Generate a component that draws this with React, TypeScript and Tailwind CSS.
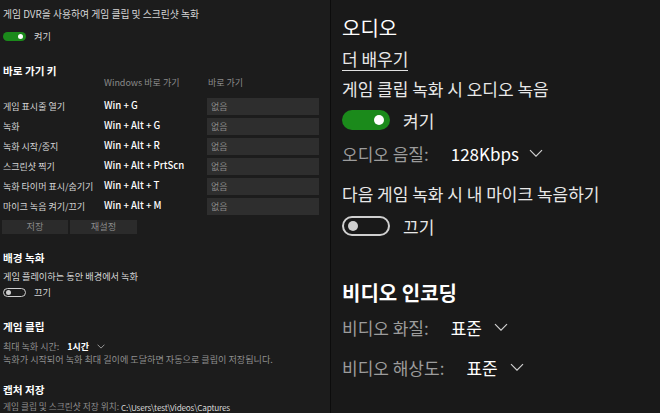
import React from 'react';

const shortcuts = [
  { label: '게임 표시줄 열기', keys: 'Win + G' },
  { label: '녹화', keys: 'Win + Alt + G' },
  { label: '녹화 시작/중지', keys: 'Win + Alt + R' },
  { label: '스크린샷 찍기', keys: 'Win + Alt + PrtScn' },
  { label: '녹화 타이머 표시/숨기기', keys: 'Win + Alt + T' },
  { label: '마이크 녹음 켜기/끄기', keys: 'Win + Alt + M' },
];

const Chevron: React.FC<{ size?: number }> = ({ size = 14 }) => (
  <svg width={size} height={size * 0.6} viewBox="0 0 14 8" fill="none" className="shrink-0">
    <polyline points="1,1 7,7 13,1" stroke="#cfcfcf" strokeWidth="1.2" />
  </svg>
);

const SmallToggle: React.FC<{ on: boolean }> = ({ on }) =>
  on ? (
    <div className="w-[23px] h-[9px] rounded-full bg-[#1b8a1b] flex items-center justify-end pr-[3px]">
      <div className="w-[5px] h-[5px] rounded-full bg-white" />
    </div>
  ) : (
    <div className="w-[23px] h-[9px] rounded-full border border-[#cfcfcf] flex items-center pl-[2px]">
      <div className="w-[5px] h-[5px] rounded-full bg-[#cfcfcf]" />
    </div>
  );

const BigToggle: React.FC<{ on: boolean }> = ({ on }) =>
  on ? (
    <div className="w-[48px] h-[20px] rounded-full bg-[#1b8a1b] flex items-center justify-end pr-[6px]">
      <div className="w-[10px] h-[10px] rounded-full bg-white" />
    </div>
  ) : (
    <div className="w-[48px] h-[20px] rounded-full border-2 border-[#cfcfcf] flex items-center pl-[4px]">
      <div className="w-[10px] h-[10px] rounded-full bg-[#cfcfcf]" />
    </div>
  );

const App: React.FC = () => {
  return (
    <div className="w-[660px] h-[413px] overflow-hidden flex bg-[#1a1a1a] font-['Noto_Sans_CJK_KR',sans-serif] leading-none">
      {/* Left: scaled settings panel */}
      <div className="w-[330px] shrink-0 bg-[#1c1c1c] px-[3px] flex flex-col text-[9.2px] text-[#d6d6d6]">
        <div className="mt-[8px] h-[14px] flex items-center text-[9.8px]">게임 DVR을 사용하여 게임 클립 및 스크린샷 녹화</div>
        <div className="mt-[9px] h-[12px] flex items-center gap-[8px]">
          <SmallToggle on />
          <span>켜기</span>
        </div>

        <div className="mt-[22px] h-[14px] flex items-center text-[10.6px] font-bold text-white">바로 가기 키</div>
        <div className="h-[8px] flex items-center text-[9px] text-[#8a8a8a]">
          <span className="ml-[101px] w-[104px]">Windows 바로 가기</span>
          <span>바로 가기</span>
        </div>

        <div className="mt-[11px] flex flex-col gap-[3px] text-[9px]">
          {shortcuts.map((s) => (
            <div key={s.label} className="h-[17px] flex items-center">
              <span className="w-[101px] shrink-0">{s.label}</span>
              <span className="w-[103px] shrink-0 text-[9.6px] font-medium text-white">{s.keys}</span>
              <div className="w-[112px] h-[17px] bg-[#2e2e2e] flex items-center pl-[4px] text-[#8a8a8a]">없음</div>
            </div>
          ))}
        </div>

        <div className="mt-[5px] h-[15px] flex gap-[2px] ml-[-1px] text-[#8a8a8a]">
          <div className="w-[66px] bg-[#2b2b2b] flex items-center justify-center">저장</div>
          <div className="w-[67px] bg-[#2b2b2b] flex items-center justify-center">재설정</div>
        </div>

        <div className="mt-[17px] h-[14px] flex items-center text-[10.6px] font-bold text-white">배경 녹화</div>
        <div className="mt-[6px] h-[12px] flex items-center">게임 플레이하는 동안 배경에서 녹화</div>
        <div className="mt-[4px] h-[12px] flex items-center gap-[8px]">
          <SmallToggle on={false} />
          <span>끄기</span>
        </div>

        <div className="mt-[22px] h-[14px] flex items-center text-[10.6px] font-bold text-white">게임 클립</div>
        <div className="mt-[6px] h-[12px] flex items-center gap-[8px] text-[9px]">
          <span className="text-[#8f8f8f]">최대 녹화 시간:</span>
          <span className="font-bold text-white">1시간</span>
          <Chevron size={8} />
        </div>
        <div className="mt-[1px] h-[12px] flex items-center text-[9.1px] text-[#8f8f8f]">
          녹화가 시작되어 녹화 최대 길이에 도달하면 자동으로 클립이 저장됩니다.
        </div>

        <div className="mt-[18px] h-[14px] flex items-center text-[10.6px] font-bold text-white">캡처 저장</div>
        <div className="mt-[4px] h-[12px] flex items-center gap-[2px]">
          <span className="text-[8.7px] text-[#8f8f8f]">게임 클립 및 스크린샷 저장 위치:</span>
          <span className="text-[8.2px] tracking-[-0.2px] text-[#d6d6d6]">C:\Users\test\Videos\Captures</span>
        </div>
      </div>

      {/* Divider */}
      <div className="w-[1px] shrink-0 bg-[#0c0c0c]" />

      {/* Right: audio / video settings */}
      <div className="flex-1 bg-[#191919] pl-[11px] flex flex-col text-[17px] text-[#e8e8e8]">
        <div className="mt-[15px] h-[26px] flex items-center text-[20px] text-white">오디오</div>
        <div className="mt-[6px] h-[24px]">
          <span className="inline-block h-full leading-[23px] border-b border-[#e0e0e0]">더 배우기</span>
        </div>
        <div className="mt-[7px] h-[20px] flex items-center">게임 클립 녹화 시 오디오 녹음</div>
        <div className="mt-[12px] h-[20px] flex items-center gap-[13px]">
          <BigToggle on />
          <span>켜기</span>
        </div>
        <div className="mt-[13px] h-[20px] flex items-center">
          <span className="text-[#9c9c9c]">오디오 음질:</span>
          <span className="ml-[22px] text-white">128Kbps</span>
          <span className="ml-[10px]"><Chevron /></span>
        </div>
        <div className="mt-[20px] h-[20px] flex items-center">다음 게임 녹화 시 내 마이크 녹음하기</div>
        <div className="mt-[13px] h-[20px] flex items-center gap-[13px]">
          <BigToggle on={false} />
          <span>끄기</span>
        </div>

        <div className="mt-[44px] h-[26px] flex items-center text-[20px] font-bold text-white">비디오 인코딩</div>
        <div className="mt-[11px] h-[20px] flex items-center">
          <span className="text-[#9c9c9c]">비디오 화질:</span>
          <span className="ml-[22px] text-white">표준</span>
          <span className="ml-[12px]"><Chevron /></span>
        </div>
        <div className="mt-[20px] h-[20px] flex items-center">
          <span className="text-[#9c9c9c]">비디오 해상도:</span>
          <span className="ml-[22px] text-white">표준</span>
          <span className="ml-[12px]"><Chevron /></span>
        </div>
      </div>
    </div>
  );
};

export default App;
